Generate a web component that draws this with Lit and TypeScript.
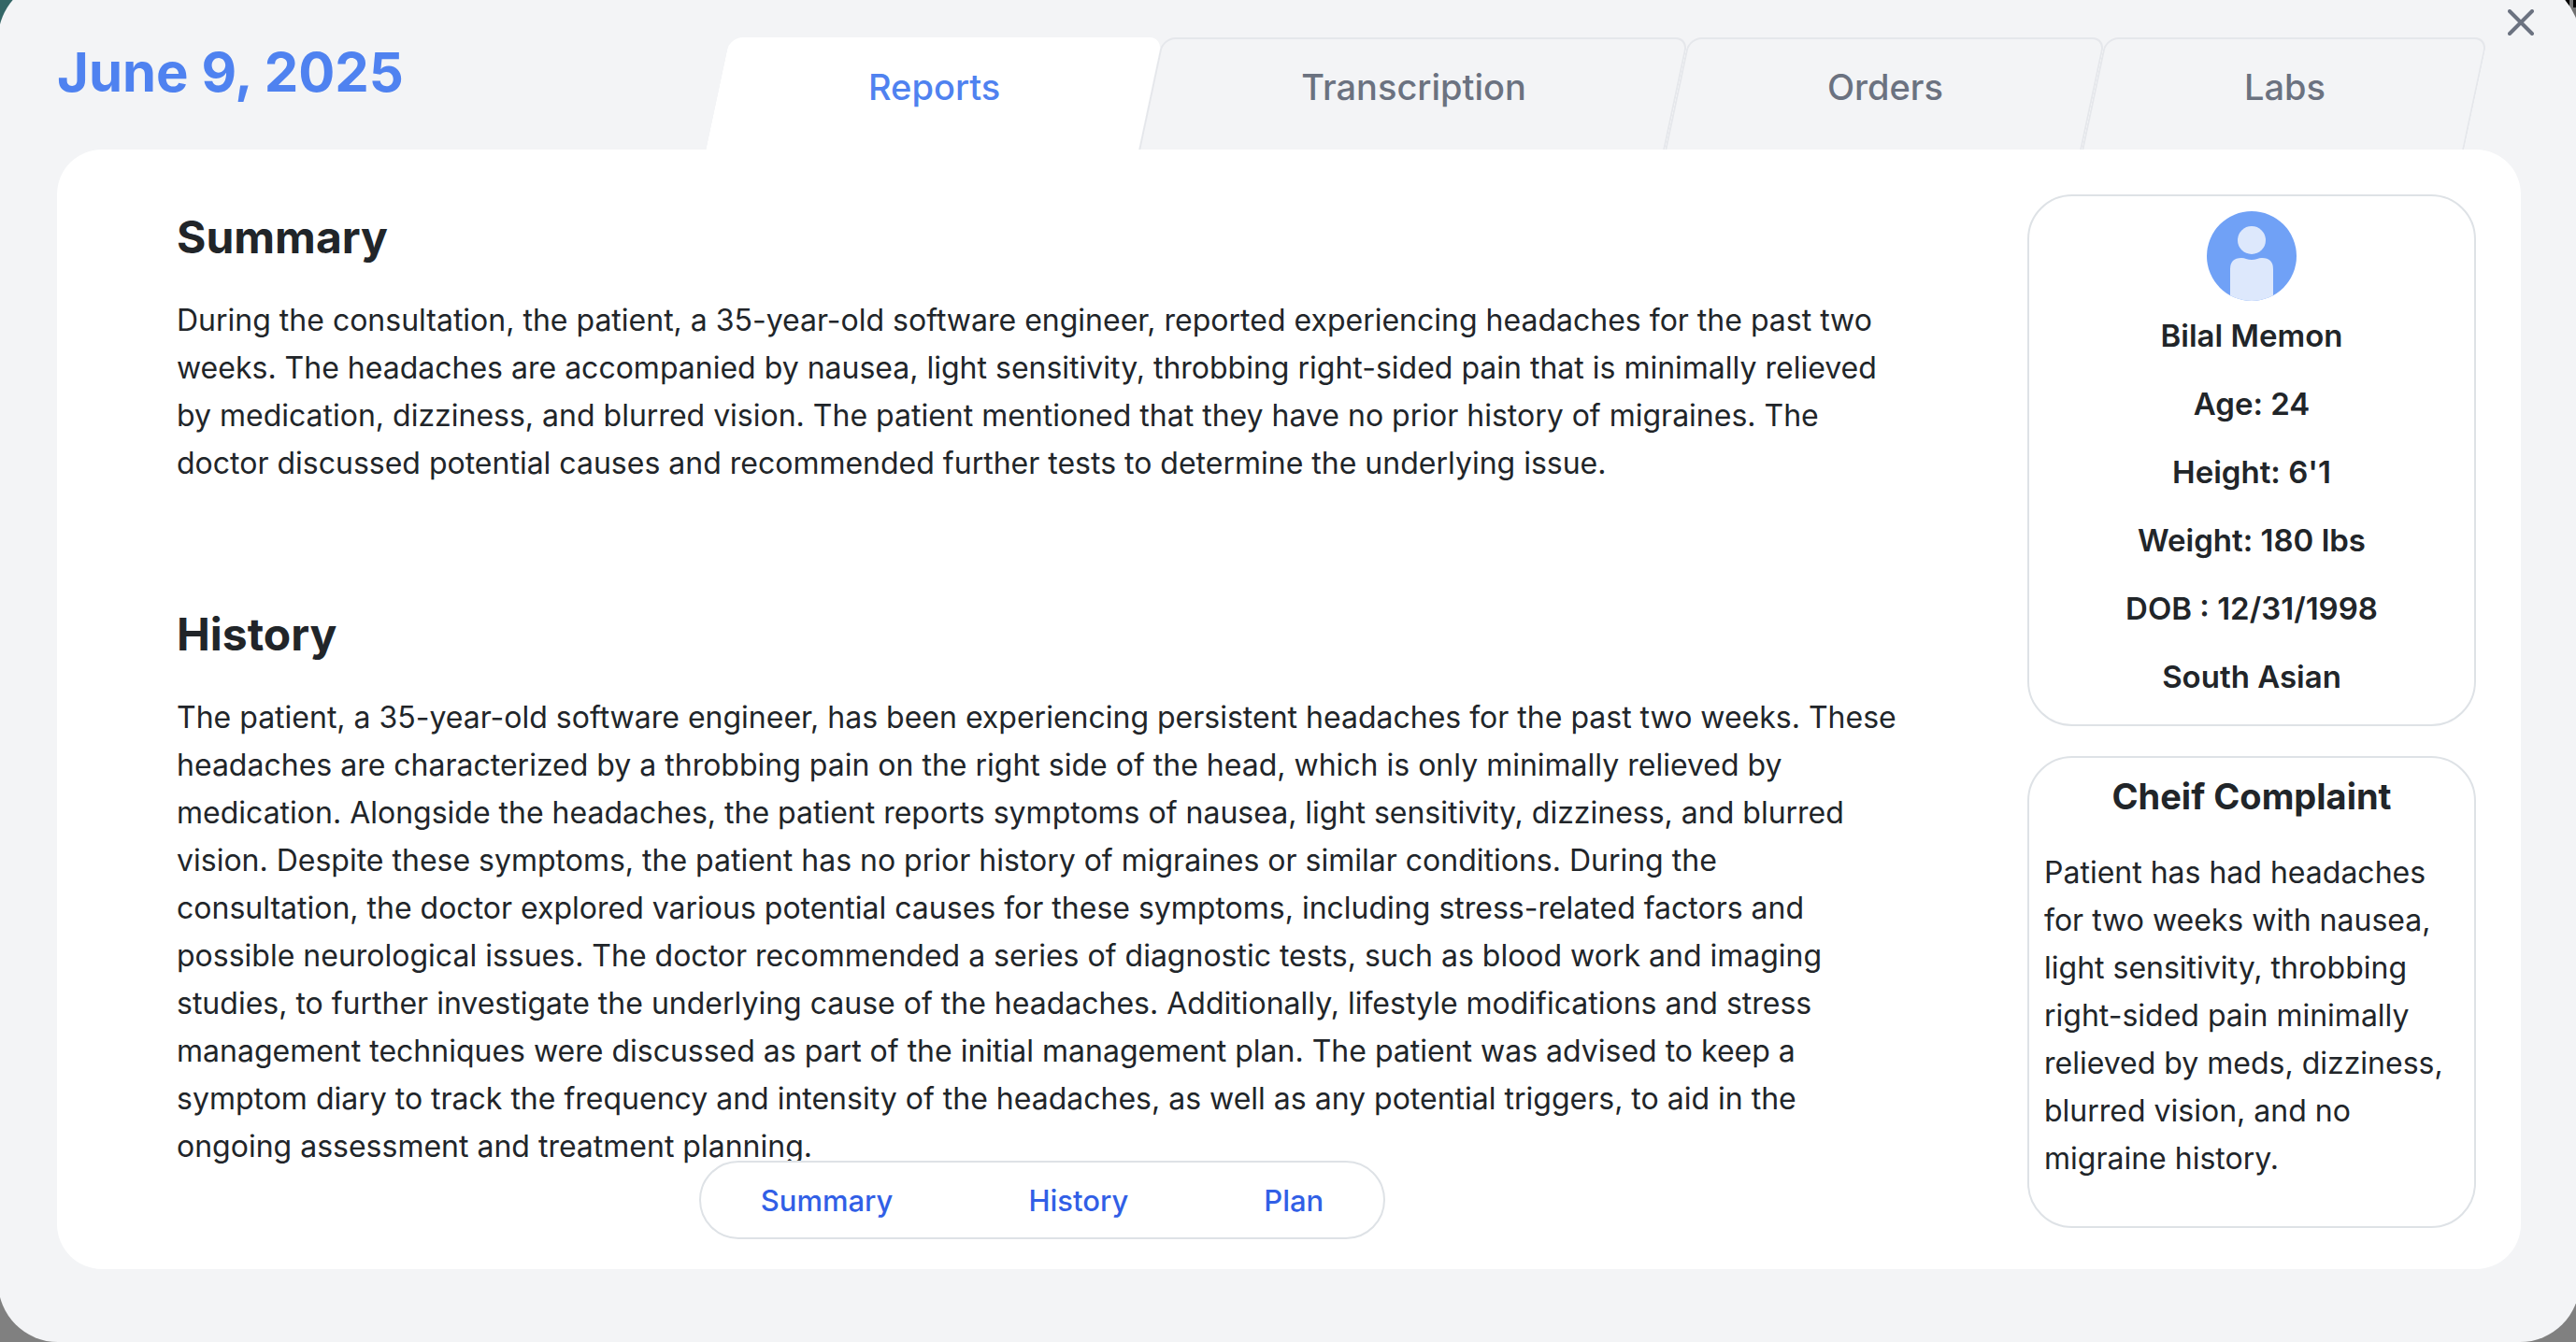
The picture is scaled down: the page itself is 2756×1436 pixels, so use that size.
import { LitElement, html, css, svg } from "lit";
import { customElement, state } from "lit/decorators.js";

const TABS = ["Reports", "Transcription", "Orders", "Labs"];

const SECTIONS = [
  {
    id: "summary",
    title: "Summary",
    text: "During the consultation, the patient, a 35-year-old software engineer, reported experiencing headaches for the past two weeks. The headaches are accompanied by nausea, light sensitivity, throbbing right-sided pain that is minimally relieved by medication, dizziness, and blurred vision. The patient mentioned that they have no prior history of migraines. The doctor discussed potential causes and recommended further tests to determine the underlying issue.",
  },
  {
    id: "history",
    title: "History",
    text: "The patient, a 35-year-old software engineer, has been experiencing persistent headaches for the past two weeks. These headaches are characterized by a throbbing pain on the right side of the head, which is only minimally relieved by medication. Alongside the headaches, the patient reports symptoms of nausea, light sensitivity, dizziness, and blurred vision. Despite these symptoms, the patient has no prior history of migraines or similar conditions. During the consultation, the doctor explored various potential causes for these symptoms, including stress-related factors and possible neurological issues. The doctor recommended a series of diagnostic tests, such as blood work and imaging studies, to further investigate the underlying cause of the headaches. Additionally, lifestyle modifications and stress management techniques were discussed as part of the initial management plan. The patient was advised to keep a symptom diary to track the frequency and intensity of the headaches, as well as any potential triggers, to aid in the ongoing assessment and treatment planning.",
  },
];

const PATIENT = [
  "Bilal Memon",
  "Age: 24",
  "Height: 6'1",
  "Weight: 180 lbs",
  "DOB : 12/31/1998",
  "South Asian",
];

const LINKS = ["Summary", "History", "Plan"];

const avatar = svg`
  <svg class="avatar" viewBox="0 0 96 96" aria-hidden="true">
    <defs><clipPath id="disc"><circle cx="48" cy="48" r="48" /></clipPath></defs>
    <g clip-path="url(#disc)">
      <rect width="96" height="96" fill="#70a1f6" />
      <circle cx="48" cy="31" r="15" fill="#dde8fc" />
      <path d="M25 96V62Q25 50 37 50Q40 50 42 51Q48 53 54 51Q56 50 59 50Q71 50 71 62V96Z" fill="#dde8fc" />
    </g>
  </svg>`;

@customElement("app-root")
export class AppRoot extends LitElement {
  @state() private active = "Reports";

  static styles = css`
    :host {
      display: flex;
      min-height: 100vh;
      overflow: hidden;
      background:
        linear-gradient(90deg, #000 0 5px, #777 5px 9px, #000 9px) top right / 12px 8px no-repeat,
        linear-gradient(90deg, #336666 0 50%, #6f6f6f 50%) top / 100% 50% no-repeat,
        #808080;
      font-family: Inter, "Liberation Sans", sans-serif;
      font-size: 32px;
      line-height: 51px;
      color: #212529;
    }
    * {
      box-sizing: border-box;
    }
    h1, h2, h3, p, ul {
      margin: 0;
      padding: 0;
    }
    button {
      font: inherit;
      border: 0;
      background: none;
      padding: 0;
      cursor: pointer;
    }
    .modal {
      flex: 1;
      display: flex;
      flex-direction: column;
      position: relative;
      margin: -22px -4px 0 -2px;
      padding: 62px 63px 78px;
      border-radius: 64px;
      background: #f3f4f6;
    }
    .close {
      position: absolute;
      top: 32px;
      right: 49px;
      width: 28px;
      height: 28px;
    }
    .close svg {
      display: block;
    }
    .header {
      display: flex;
      justify-content: space-between;
      padding-right: 48px;
      height: 120px;
    }
    .date {
      font-size: 58px;
      line-height: 74px;
      font-weight: 700;
      color: #4f82f0;
    }
    .tabs {
      display: flex;
    }
    .tab {
      position: relative;
      z-index: 0;
      height: 120px;
      padding: 0 161px 14px;
      font-size: 38px;
      font-weight: 500;
      color: #6b7280;
    }
    .tab::before {
      content: "";
      position: absolute;
      z-index: -1;
      inset: 0;
      transform: skewX(-12deg);
      border: 2px solid #e5e7eb;
      border-bottom: 0;
      border-radius: 14px 14px 0 0;
      background: #f3f4f6;
    }
    .tab.active {
      color: #4f82f0;
    }
    .tab.active::before {
      background: #fff;
      border-color: #fff;
    }
    .panel {
      flex: 1;
      display: flex;
      position: relative;
      padding: 48px 48px 44px 0;
      border-radius: 48px;
      background: #fff;
    }
    .main {
      flex: 1;
      padding: 16px 136px 0 128px;
    }
    .section {
      margin-bottom: 128px;
    }
    .section h2 {
      font-size: 48px;
      line-height: 60px;
      font-weight: 700;
      margin-bottom: 33px;
    }
    .section:last-of-type {
      margin-bottom: 0;
    }
    .nav {
      position: absolute;
      left: 0;
      right: 528px;
      bottom: 32px;
      display: flex;
      justify-content: center;
    }
    .pill {
      display: flex;
      gap: 145px;
      padding: 15px 64px 14px;
      border: 2px solid #dee2e6;
      border-radius: 42px;
      background: #fff;
    }
    .pill a {
      font-size: 31px;
      font-weight: 500;
      color: #315fe6;
      text-decoration: none;
    }
    .side {
      display: flex;
      flex-direction: column;
      gap: 32px;
      width: 480px;
    }
    .card {
      border: 2px solid #dee2e6;
      border-radius: 48px;
      padding: 16px;
    }
    .patient {
      display: flex;
      flex-direction: column;
      align-items: center;
      padding-bottom: 25px;
    }
    .avatar {
      width: 96px;
      height: 96px;
      margin-bottom: 12px;
    }
    .facts {
      display: grid;
      gap: 22px;
      list-style: none;
      text-align: center;
      font-size: 33px;
      font-weight: 600;
    }
    .complaint {
      flex: 1;
    }
    .complaint h3 {
      font-size: 38px;
      line-height: 50px;
      font-weight: 700;
      text-align: center;
      margin-bottom: 31px;
    }
  `;

  render() {
    return html`
      <div class="modal" role="dialog" aria-label="June 9, 2025">
        <button class="close" aria-label="Close">
          <svg width="28" height="28" viewBox="0 0 28 28" fill="none" stroke="#6b7280" stroke-width="4" stroke-linecap="round">
            <path d="M2 2L26 26M26 2L2 26" />
          </svg>
        </button>
        <header class="header">
          <h1 class="date">June 9, 2025</h1>
          <nav class="tabs" role="tablist">
            ${TABS.map(
              (tab) => html`<button
                class="tab ${tab === this.active ? "active" : ""}"
                role="tab"
                aria-selected=${tab === this.active}
                @click=${() => (this.active = tab)}
              >${tab}</button>`
            )}
          </nav>
        </header>
        <div class="panel">
          <main class="main">
            ${SECTIONS.map(
              (s) => html`<section class="section" id=${s.id}>
                <h2>${s.title}</h2>
                <p>${s.text}</p>
              </section>`
            )}
          </main>
          <aside class="side">
            <div class="card patient">
              ${avatar}
              <ul class="facts">
                ${PATIENT.map((fact) => html`<li>${fact}</li>`)}
              </ul>
            </div>
            <div class="card complaint">
              <h3>Cheif Complaint</h3>
              <p>Patient has had headaches for two weeks with nausea, light sensitivity, throbbing right-sided pain minimally relieved by meds, dizziness, blurred vision, and no migraine history.</p>
            </div>
          </aside>
          <nav class="nav" aria-label="Sections">
            <div class="pill">
              ${LINKS.map((l) => html`<a href="#${l.toLowerCase()}">${l}</a>`)}
            </div>
          </nav>
        </div>
      </div>
    `;
  }
}
